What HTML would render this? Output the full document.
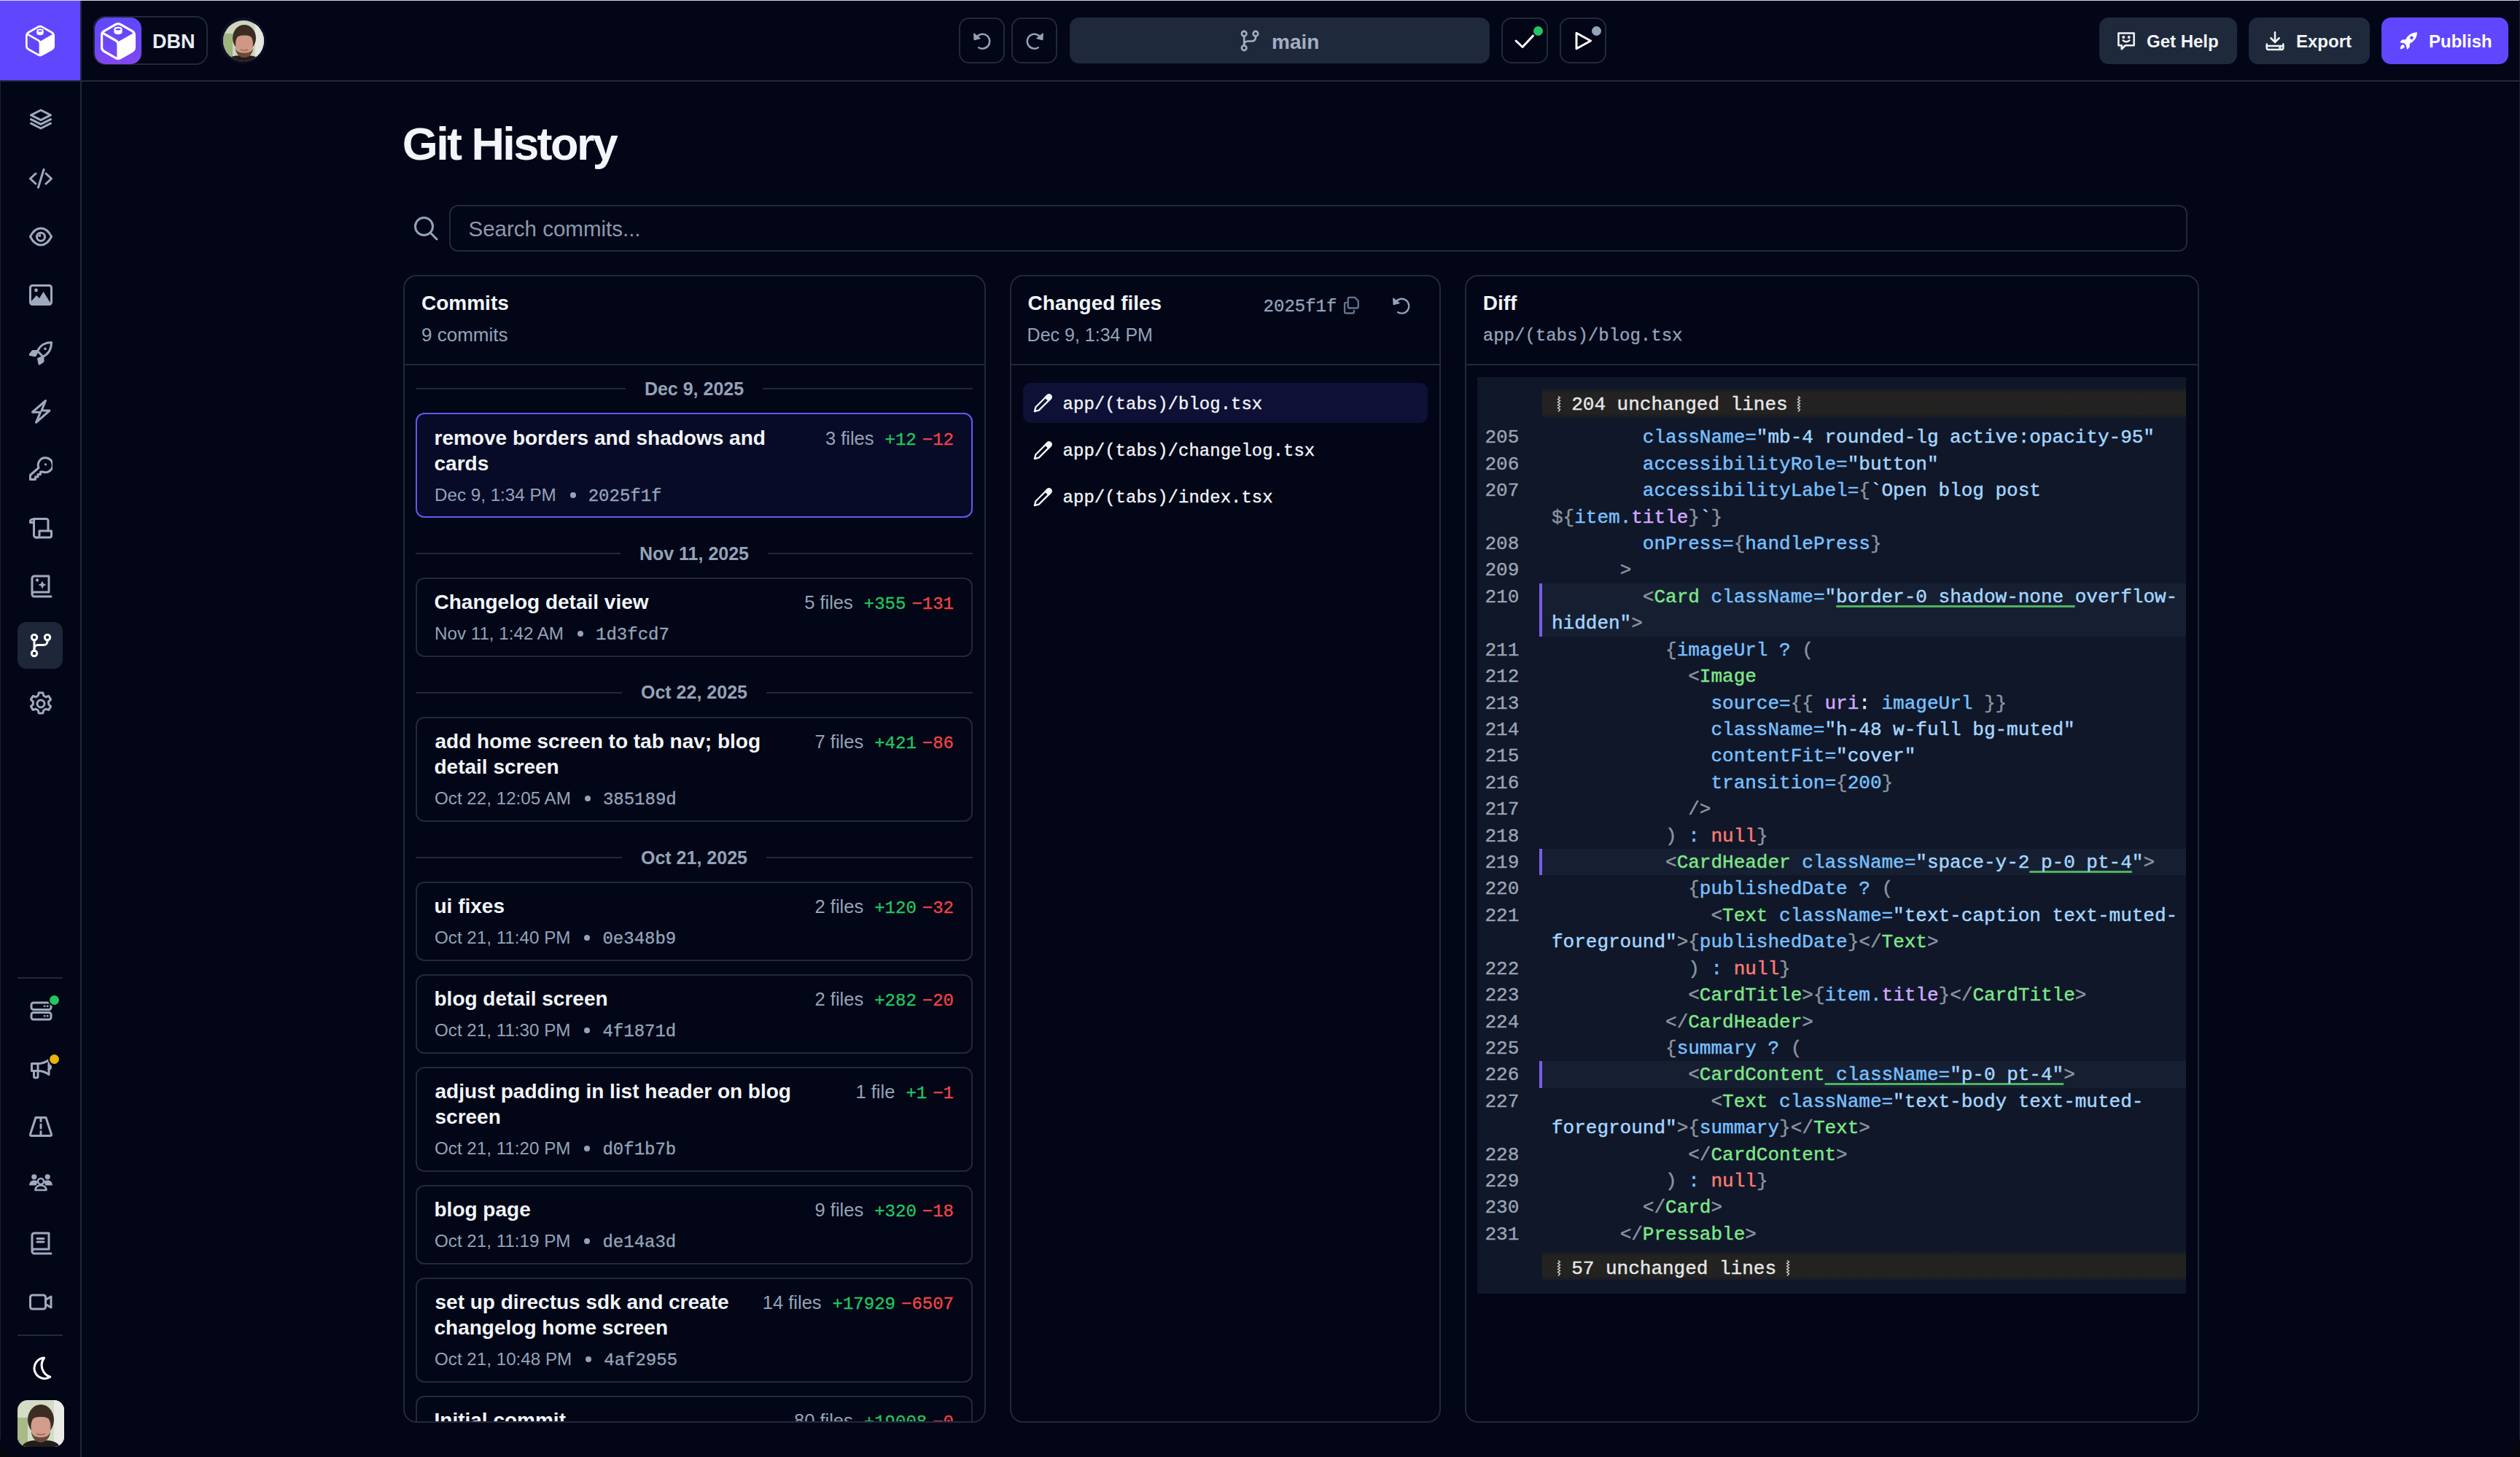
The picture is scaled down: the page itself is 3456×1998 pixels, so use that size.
<!DOCTYPE html>
<html><head><meta charset="utf-8">
<style>
html,body{margin:0;padding:0;background:#05070a;}
body{width:3456px;height:1998px;overflow:hidden;position:relative;font-family:"Liberation Sans",sans-serif;}
#frame{position:absolute;left:0;top:0;width:3456px;height:1998px;background:#020617;border-radius:0 0 28px 28px;overflow:hidden;}
.abs{position:absolute;}
.mono{font-family:"Liberation Mono",monospace;}
.topline{left:0;top:0;width:3456px;height:1px;background:rgba(232,234,246,0.9);}
.hline{background:#23283a;}
.btn-o{position:absolute;box-sizing:border-box;border:2px solid #23283a;border-radius:14px;}
.btn-f{position:absolute;background:#1e293b;border-radius:13px;}
svg{display:block;}
.ic{position:absolute;}
.t{position:absolute;white-space:pre;line-height:1;}
</style></head>
<body>
<div id="frame">
  <!-- sidebar / header lines -->
  <div class="abs" style="left:0;top:0;width:110px;height:110px;background:#6047fd"></div>
  <div class="abs hline" style="left:110px;top:0;width:2px;height:1998px"></div>
  <div class="abs hline" style="left:0;top:110px;width:3456px;height:2px"></div>
  <div class="abs topline"></div>
  <div class="abs" style="left:0;top:110px;width:1px;height:1888px;background:#1d2030"></div>
  <div class="abs" style="left:3455px;top:0;width:1px;height:1998px;background:#1d2030"></div>
  <!--HEADER-->
  <svg class="ic" style="left:35px;top:34px" width="40" height="44" viewBox="0 0 40 44">
    <path d="M20 22.7 L38.7 12 L38.7 32 L20 42.7 Z" fill="#fff"/>
    <path d="M17.4 2.8 Q20 1.3 22.6 2.8 L36.1 10.5 Q38.7 12 38.7 15 L38.7 29 Q38.7 32 36.1 33.5 L22.6 41.2 Q20 42.7 17.4 41.2 L3.9 33.5 Q1.3 32 1.3 29 L1.3 15 Q1.3 12 3.9 10.5 Z" fill="none" stroke="#fff" stroke-width="2.7"/>
    <path d="M2.5 12.8 L17.6 21.4 Q20 22.8 20 25.6 L20 42" fill="none" stroke="#fff" stroke-width="2.7" stroke-linecap="round"/>
    <path d="M15.3 8.4 V11.6 A4.7 2.7 0 0 0 24.7 11.6 V8.4 Z" fill="#fff"/>
    <ellipse cx="20" cy="8.4" rx="3.8" ry="1.9" fill="#6047fd" stroke="#fff" stroke-width="1.8"/>
  </svg>
  <div class="btn-o" style="left:128px;top:22px;width:157px;height:67px;border-radius:16px"></div>
  <div class="abs" style="left:130px;top:24px;width:64px;height:64px;border-radius:15px;background:linear-gradient(180deg,#6047fd 0%,#6a48f8 55%,#8446f0 100%)"></div>
  <svg class="ic" style="left:138px;top:30px" width="48" height="53" viewBox="0 0 40 44">
    <path d="M20 22.7 L38.7 12 L38.7 32 L20 42.7 Z" fill="#fff"/>
    <path d="M17.4 2.8 Q20 1.3 22.6 2.8 L36.1 10.5 Q38.7 12 38.7 15 L38.7 29 Q38.7 32 36.1 33.5 L22.6 41.2 Q20 42.7 17.4 41.2 L3.9 33.5 Q1.3 32 1.3 29 L1.3 15 Q1.3 12 3.9 10.5 Z" fill="none" stroke="#fff" stroke-width="2.7"/>
    <path d="M2.5 12.8 L17.6 21.4 Q20 22.8 20 25.6 L20 42" fill="none" stroke="#fff" stroke-width="2.7" stroke-linecap="round"/>
    <path d="M15.3 8.4 V11.6 A4.7 2.7 0 0 0 24.7 11.6 V8.4 Z" fill="#fff"/>
    <ellipse cx="20" cy="8.4" rx="3.8" ry="1.9" fill="#6447fb" stroke="#fff" stroke-width="1.8"/>
  </svg>
  <div class="t" style="left:209px;top:44.3px;font-size:27px;font-weight:bold;color:#e8ecf6">DBN</div>
  <!-- avatar -->
  <div class="abs" style="left:302px;top:24px;width:63px;height:63px;border-radius:50%;background:#120f2a"></div>
  <svg class="ic" style="left:306px;top:28px" width="56" height="56" viewBox="0 0 56 56">
    <defs><clipPath id="cav"><circle cx="28" cy="28" r="28"/></clipPath></defs>
    <g clip-path="url(#cav)">
      <rect width="56" height="56" fill="#cdd6bd"/>
      <rect x="0" y="18" width="13" height="34" fill="#9fb47e"/>
      <rect x="44" y="0" width="12" height="56" fill="#e6e7e0"/>
      <path d="M4 56 Q8 47 28 48 Q48 47 52 56 Z" fill="#231d1a"/>
      <ellipse cx="29" cy="24" rx="16" ry="18" fill="#3b2d24"/>
      <ellipse cx="29" cy="32" rx="12" ry="15" fill="#cf9784"/>
      <path d="M16 27 C16 19 21 15 29 15 C37 15 42 19 42 27 C40 22 35.5 20.5 29 20.5 C22.5 20.5 18 22 16 27 Z" fill="#3b2d24"/>
      <path d="M16.5 37 C17.5 46 22 51 29 51 C36 51 40.5 46 41.5 37 C39.5 43 35.5 44.5 29 44.5 C22.5 44.5 18.5 43 16.5 37 Z" fill="#6a4a3a"/>
      <path d="M24 40 Q29 42.5 34 40" stroke="#a86a5e" stroke-width="1.5" fill="none"/>
    </g>
  </svg>
  <!-- undo / redo -->
  <div class="btn-o" style="left:1315px;top:24px;width:63px;height:63px"></div>
  <svg class="ic" style="left:1332px;top:42px" width="28" height="28" viewBox="0 0 24 24" fill="none" stroke="#94a3b8" stroke-width="2.1" stroke-linecap="round" stroke-linejoin="round">
    <path d="M5.2 9.6 A8.5 8.5 0 1 1 8.75 19.9"/><path d="M3.2 3.4 L3.5 10.8 L10.4 9.2 Z" fill="#94a3b8" stroke-width="1"/>
  </svg>
  <div class="btn-o" style="left:1387px;top:24px;width:63px;height:63px"></div>
  <svg class="ic" style="left:1406px;top:42px" width="28" height="28" viewBox="0 0 24 24" fill="none" stroke="#94a3b8" stroke-width="2.1" stroke-linecap="round" stroke-linejoin="round">
    <path d="M18.8 9.6 A8.5 8.5 0 1 0 15.25 19.9"/><path d="M20.8 3.4 L20.5 10.8 L13.6 9.2 Z" fill="#94a3b8" stroke-width="1"/>
  </svg>
  <!-- branch bar -->
  <div class="btn-f" style="left:1467px;top:24px;width:576px;height:63px"></div>
  <svg class="ic" style="left:1701px;top:41px" width="28" height="30" viewBox="0 0 28 30" fill="none" stroke="#a3aec4" stroke-width="2.6" stroke-linecap="round">
    <circle cx="5.2" cy="5.2" r="3.3"/><circle cx="21" cy="5.2" r="3.3"/><circle cx="5.2" cy="24.8" r="3.3"/>
    <path d="M5.2 8.5 V21.5 M21 8.5 V10.5 A5 5 0 0 1 16 15.5 H10.2 A5 5 0 0 0 5.2 20.5"/>
  </svg>
  <div class="t" style="left:1744px;top:44px;font-size:28px;font-weight:bold;color:#a3aec4">main</div>
  <!-- check / play -->
  <div class="btn-o" style="left:2059px;top:24px;width:64px;height:63px"></div>
  <svg class="ic" style="left:2076px;top:45px" width="30" height="22" viewBox="0 0 30 22" fill="none" stroke="#fff" stroke-width="3" stroke-linecap="round" stroke-linejoin="round"><path d="M3 11 L12 19.5 L27.5 3"/></svg>
  <div class="abs" style="left:2102.5px;top:35.5px;width:13px;height:13px;border-radius:50%;background:#22c55e;box-shadow:0 0 0 2px #020617"></div>
  <div class="btn-o" style="left:2139px;top:24px;width:64px;height:63px"></div>
  <svg class="ic" style="left:2157px;top:42px" width="28" height="28" viewBox="0 0 28 28" fill="none" stroke="#fff" stroke-width="3" stroke-linejoin="round" stroke-linecap="round"><path d="M5 3.2 L24.5 14 L5 24.8 Z"/></svg>
  <div class="abs" style="left:2182.5px;top:35.5px;width:13px;height:13px;border-radius:50%;background:#94a3b8;box-shadow:0 0 0 2px #020617"></div>
  <!-- right buttons -->
  <div class="btn-f" style="left:2879px;top:24px;width:189px;height:64px"></div>
  <svg class="ic" style="left:2901px;top:41px" width="30" height="30" viewBox="0 0 24 24" fill="none" stroke="#f1f5f9" stroke-width="2" stroke-linecap="round" stroke-linejoin="round">
    <path d="M3.5 3.5 H20.5 V17 H11 L7 21 V17 H3.5 Z"/><path d="M8.5 11.5 Q12 14.5 15.5 11.5"/><circle cx="9" cy="8" r="0.6" fill="#f1f5f9"/><circle cx="15" cy="8" r="0.6" fill="#f1f5f9"/>
  </svg>
  <div class="t" style="left:2944px;top:45px;font-size:24px;font-weight:bold;color:#f1f5f9">Get Help</div>
  <div class="btn-f" style="left:3084px;top:24px;width:166px;height:64px"></div>
  <svg class="ic" style="left:3105px;top:41px" width="30" height="30" viewBox="0 0 24 24" fill="none" stroke="#f1f5f9" stroke-width="2" stroke-linecap="round" stroke-linejoin="round">
    <path d="M12 2.5 V13.5 M7.5 9 L12 13.5 L16.5 9"/><path d="M3 15.5 V20 A1.5 1.5 0 0 0 4.5 21.5 H19.5 A1.5 1.5 0 0 0 21 20 V15.5"/><path d="M3 17.5 H21"/><circle cx="17.5" cy="19.5" r="0.5" fill="#f1f5f9"/>
  </svg>
  <div class="t" style="left:3149px;top:45px;font-size:24px;font-weight:bold;color:#f1f5f9">Export</div>
  <div class="abs" style="left:3266px;top:24px;width:174px;height:64px;border-radius:13px;background:#6047fd"></div>
  <svg class="ic" style="left:3288px;top:41px" width="30" height="30" viewBox="0 0 24 24">
    <path d="M21.5 2.5 C16 2.5 11.5 5.5 9 10.5 L5 10.8 L2.5 13.5 L7.5 14.8 L9.2 16.5 L10.5 21.5 L13.2 19 L13.5 15 C18.5 12.5 21.5 8 21.5 2.5 Z" fill="#fff"/>
    <circle cx="15.5" cy="8.5" r="1.8" fill="#6047fd"/>
    <path d="M6 16 C4 16.5 3 18.5 2.8 21.2 C5.5 21 7.5 20 8 18 Z" fill="#fff"/>
  </svg>
  <div class="t" style="left:3331px;top:45px;font-size:24px;font-weight:bold;color:#fff">Publish</div>
  <!--SIDEBAR-->
  <div class="abs" style="left:24px;top:853px;width:62px;height:64px;border-radius:12px;background:#1e273a"></div>
  <svg class="ic" style="left:40px;top:148px" width="32" height="960" viewBox="0 0 32 960" fill="none" stroke="#a0aabe" stroke-width="3" stroke-linecap="round" stroke-linejoin="round">
    <!-- layers: center y 16 -->
    <path d="M16 3 L29.5 9.8 L16 16.6 L2.5 9.8 Z"/>
    <path d="M2.5 15.6 L16 22.4 L29.5 15.6"/>
    <path d="M2.5 21.2 L16 28 L29.5 21.2"/>
    <!-- code: cy 96 (245-149) -->
    <g transform="translate(0,80)">
      <path d="M9 10 L1.5 17 L9 24"/><path d="M23 10 L30.5 17 L23 24"/><path d="M20 4.5 L12.5 29"/>
    </g>
    <!-- eye: cy 176 -->
    <g transform="translate(0,160)">
      <path d="M1.5 16.5 C5 9.5 10 5 16 5 C22 5 27 9.5 30.5 16.5 C27 23.5 22 28 16 28 C10 28 5 23.5 1.5 16.5 Z"/>
      <circle cx="16" cy="16.8" r="5.6"/>
      <path d="M16 16.8 L12.2 16.8 A3.8 3.8 0 0 1 16 13 Z" fill="#a0aabe" stroke="none"/>
    </g>
    <!-- image: cy 256 -->
    <g transform="translate(0,240)">
      <rect x="1.5" y="3.5" width="29" height="26" rx="3"/>
      <path d="M3 28 L3 25 L10 17 L14 21 L19.5 12 L29 27 L29 28 Z" fill="#a0aabe" stroke="none"/>
      <circle cx="9.5" cy="10" r="2.4" fill="#a0aabe" stroke="none"/>
    </g>
    <!-- rocket: cy 336 -->
    <g transform="translate(0,320)">
      <path d="M30.5 1.5 C23 1.5 15 5 11.5 13.5 L19 21 C27.5 17 30.5 9 30.5 1.5 Z"/>
      <path d="M11.5 13.5 L5 13.5 L1 18.3 L8.2 19.8 Z" fill="#a0aabe"/>
      <path d="M19 21 L19 27.5 L14 31 L12.6 24 Z" fill="#a0aabe"/>
      <circle cx="22" cy="10.3" r="1.8" fill="#a0aabe" stroke="none"/>
    </g>
    <!-- zap: cy 416 -->
    <g transform="translate(0,400)">
      <path d="M22.5 1.5 L4.5 17.2 L15.5 17.2 L9.5 31.3 L28 15 L17 15 Z"/>
    </g>
    <!-- key: cy 496 -->
    <g transform="translate(0,480)">
      <path d="M13 13.5 A10 10 0 1 1 18.5 19 L15.5 19 L15.5 22.5 L12 22.5 L12 26 L8.5 26 L8.5 29.5 L1.5 29.5 L1.5 23.5 Z"/>
      <circle cx="22.5" cy="8.8" r="1.6" fill="#a0aabe" stroke="none"/>
    </g>
    <!-- scroll: cy 576 -->
    <g transform="translate(0,560)">
      <path d="M6.5 8.5 H1.5 V6.5 A3 3 0 0 1 6.5 5 V26 A3 3 0 0 0 9.5 29"/>
      <path d="M6 3.5 H23.5 A2.5 2.5 0 0 1 26 6 V20"/>
      <path d="M9.5 29 H28 A2.5 2.5 0 0 0 30.5 26.5 V20 H14 V26 A3 3 0 0 1 9.5 29"/>
    </g>
    <!-- book sparkles: cy 656 -->
    <g transform="translate(0,640)">
      <path d="M4 26.5 V5 A3 3 0 0 1 7 2 H27 V24 H7 A3 3 0 0 0 4 27 A3 3 0 0 0 7 30 H30"/>
      <path d="M11 6 V9 M9.5 7.5 H12.5" stroke-width="2"/>
      <path d="M18 9.5 C18.5 12.5 19.5 13.5 22.5 14 C19.5 14.5 18.5 15.5 18 18.5 C17.5 15.5 16.5 14.5 13.5 14 C16.5 13.5 17.5 12.5 18 9.5 Z" fill="#a0aabe" stroke-width="1.2"/>
    </g>
    <!-- git branch (active, white): cy 736 -->
    <g transform="translate(0,720)" stroke="#ffffff">
      <circle cx="7" cy="6" r="3.7"/><circle cx="25" cy="6" r="3.7"/><circle cx="7" cy="28" r="3.7"/>
      <path d="M7 9.7 V24.3"/><path d="M25 9.7 V11.5 A5 5 0 0 1 20 16.5 H12 A5 5 0 0 0 7 21.5"/>
    </g>
    <!-- gear: cy 816 -->
    <g transform="translate(0,800)">
      <circle cx="16" cy="17" r="5"/>
      <path d="M13.2 1.5 H18.8 L19.8 5.5 L22.8 7.2 L26.8 6 L29.6 10.8 L26.6 13.7 V17.3 L29.6 20.2 L26.8 25 L22.8 23.8 L19.8 25.5 L18.8 29.5 H13.2 L12.2 25.5 L9.2 23.8 L5.2 25 L2.4 20.2 L5.4 17.3 V13.7 L2.4 10.8 L5.2 6 L9.2 7.2 L12.2 5.5 Z" transform="translate(0,0.5)"/>
    </g>
  </svg>
  <div class="abs hline" style="left:24px;top:1340px;width:62px;height:2px"></div>
  <svg class="ic" style="left:40px;top:1369px" width="32" height="520" viewBox="0 0 32 520" fill="none" stroke="#a0aabe" stroke-width="3" stroke-linecap="round" stroke-linejoin="round">
    <!-- server: cy 16 (1385) -->
    <rect x="3" y="6" width="27" height="9.5" rx="3"/><rect x="3" y="19.5" width="27" height="9.5" rx="3"/>
    <circle cx="21" cy="10.8" r="1" fill="#a0aabe" stroke-width="1"/><circle cx="25" cy="10.8" r="1" fill="#a0aabe" stroke-width="1"/>
    <circle cx="21" cy="24.2" r="1" fill="#a0aabe" stroke-width="1"/><circle cx="25" cy="24.2" r="1" fill="#a0aabe" stroke-width="1"/>
    <!-- megaphone: cy 96 (1465) -->
    <g transform="translate(0,80)">
      <path d="M3.5 9.5 H12 V19.5 H3.5 Z" transform="translate(0,0)"/>
      <path d="M12 9.5 C18 9.5 23 7.5 27 4.5 V24.5 C23 21.5 18 19.5 12 19.5"/>
      <path d="M6.5 19.5 V27 A2 2 0 0 0 8.5 29 H10 A2 2 0 0 0 12 27 V19.5"/>
      <path d="M27 12 A2.5 2.5 0 0 1 27 17" />
    </g>
    <!-- road: cy 176 (1546) -->
    <g transform="translate(0,160)">
      <path d="M9 3.5 H23 L30.5 26.5 A1.5 1.5 0 0 1 29 28.5 H3 A1.5 1.5 0 0 1 1.5 26.5 Z"/>
      <path d="M16 5 V8.5 M16 13 V18 M16 22.5 V27"/>
    </g>
    <!-- users: cy 256 (1625) -->
    <g transform="translate(0,240)">
      <circle cx="6.8" cy="4.8" r="3.6" fill="#a0aabe" stroke="none"/><circle cx="25.2" cy="4.8" r="3.6" fill="#a0aabe" stroke="none"/>
      <path d="M0 16.5 C0.5 11.5 3 9.5 7 9.5 C10 9.5 11.5 10.5 12.5 12 C10.5 13.5 10 15 9.8 16.5 Z" fill="#a0aabe" stroke="none"/>
      <path d="M32 16.5 C31.5 11.5 29 9.5 25 9.5 C22 9.5 20.5 10.5 19.5 12 C21.5 13.5 22 15 22.2 16.5 Z" fill="#a0aabe" stroke="none"/>
      <circle cx="16" cy="11" r="4" stroke-width="2.6"/>
      <path d="M8.5 23 C9 18.5 12 16.5 16 16.5 C20 16.5 23 18.5 23.5 23 Z" stroke-width="2.6"/>
    </g>
    <!-- book: cy 336 (1706) -->
    <g transform="translate(0,320)">
      <path d="M4 26.5 V5 A3 3 0 0 1 7 2 H27 V24 H7 A3 3 0 0 0 4 27 A3 3 0 0 0 7 30 H30"/>
      <path d="M11 9.5 H20 M11 14 H20"/>
    </g>
    <!-- video: cy 416 (1786) -->
    <g transform="translate(0,400)">
      <rect x="1.5" y="7" width="21" height="19" rx="3"/>
      <path d="M22.5 13.5 L30 9 V24 L22.5 19.5"/>
    </g>
  </svg>
  <div class="abs" style="left:67.5px;top:1365px;width:13px;height:13px;border-radius:50%;background:#22c55e;box-shadow:0 0 0 2px #020617"></div>
  <div class="abs" style="left:67.5px;top:1445.5px;width:13px;height:13px;border-radius:50%;background:#eab308;box-shadow:0 0 0 2px #020617"></div>
  <div class="abs hline" style="left:24px;top:1830px;width:62px;height:2px"></div>
  <svg class="ic" style="left:42px;top:1860px" width="30" height="32" viewBox="0 0 30 32" fill="none" stroke="#fff" stroke-width="3" stroke-linejoin="round">
    <path d="M18.5 2 A14.2 14.2 0 1 0 26.8 28.2 A17 17 0 0 1 18.5 2 Z"/>
  </svg>
  <svg class="ic" style="left:24px;top:1920px" width="64" height="64" viewBox="0 0 64 64">
    <defs><clipPath id="cav2"><rect width="64" height="64" rx="14"/></clipPath></defs>
    <g clip-path="url(#cav2)">
      <rect width="64" height="64" fill="#d3dcc4"/>
      <rect x="0" y="24" width="14" height="40" fill="#a7ba88"/>
      <rect x="50" y="0" width="14" height="64" fill="#e9eae4"/>
      <path d="M6 64 Q10 54 32 55 Q54 54 58 64 Z" fill="#231d1a"/>
      <ellipse cx="32" cy="27" rx="18" ry="21" fill="#3b2d24"/>
      <ellipse cx="32" cy="36" rx="13.5" ry="17" fill="#d29c8a"/>
      <path d="M17.5 30 C17.5 21 23 16.5 32 16.5 C41 16.5 46.5 21 46.5 30 C44 24.5 39 23 32 23 C25 23 20 24.5 17.5 30 Z" fill="#3b2d24"/>
      <path d="M18.5 42 C19.5 52 25 58 32 58 C39 58 44.5 52 45.5 42 C43 49 39 51 32 51 C25 51 21 49 18.5 42 Z" fill="#6a4a3a"/>
      <path d="M26 46 Q32 49 38 46" stroke="#a86a5e" stroke-width="1.8" fill="none"/>
    </g>
  </svg>
  <div class="t" style="left:551.8px;top:165.9px;font-size:63px;font-weight:bold;color:#f3f5fa;letter-spacing:-2.6px">Git History</div>
<svg class="ic" style="left:566px;top:295px" width="36" height="36" viewBox="0 0 36 36" fill="none" stroke="#94a3b8" stroke-width="3" stroke-linecap="round"><circle cx="15.5" cy="15.5" r="12"/><path d="M24.5 24.5 L33 33"/></svg>
<div class="abs" style="left:616px;top:281px;width:2384px;height:64px;box-sizing:border-box;border:2px solid #23283a;border-radius:12px"></div>
<div class="t" style="left:642.5px;top:298.9px;font-size:29.5px;color:#8e99ad;">Search commits...</div>
<div class="abs" style="left:553px;top:377px;width:799px;height:1574px;box-sizing:border-box;border:2px solid #23283a;border-radius:18px"></div>
<div class="abs" style="left:553px;top:499px;width:799px;height:2px;background:#23283a"></div>
<div class="abs" style="left:1385px;top:377px;width:591px;height:1574px;box-sizing:border-box;border:2px solid #23283a;border-radius:18px"></div>
<div class="abs" style="left:1385px;top:499px;width:591px;height:2px;background:#23283a"></div>
<div class="abs" style="left:2009px;top:377px;width:1007px;height:1574px;box-sizing:border-box;border:2px solid #23283a;border-radius:18px"></div>
<div class="abs" style="left:2009px;top:499px;width:1007px;height:2px;background:#23283a"></div>
<div class="t" style="left:578.0px;top:402.2px;font-size:28px;font-weight:bold;color:#f1f5f9;">Commits</div>
<div class="t" style="left:578.0px;top:445.7px;font-size:26px;color:#94a3b8;">9 commits</div>
<div class="t" style="left:1409.6px;top:402.2px;font-size:28px;font-weight:bold;color:#f1f5f9;">Changed files</div>
<div class="t" style="left:1408.6px;top:446.8px;font-size:25px;color:#94a3b8;">Dec 9, 1:34 PM</div>
<div class="t" style="left:1732.6px;top:409.4px;font-size:24px;font-family:'Liberation Mono',monospace;-webkit-text-stroke:0.35px currentColor;color:#94a3b8;">2025f1f</div>
<svg class="ic" style="left:1840px;top:405px" width="28" height="28" viewBox="0 0 24 24" fill="none" stroke="#64748b" stroke-width="2" stroke-linecap="round" stroke-linejoin="round"><path d="M9 2.5 H15.5 L19.5 6.5 V13.5 A1.5 1.5 0 0 1 18 15 H9 A1.5 1.5 0 0 1 7.5 13.5 V4 A1.5 1.5 0 0 1 9 2.5 Z"/><path d="M14.5 18 V19.5 A1.5 1.5 0 0 1 13 21 H5 A1.5 1.5 0 0 1 3.5 19.5 V10 A1.5 1.5 0 0 1 5 8.5 H5.5"/></svg>
<svg class="ic" style="left:1907px;top:405px" width="28" height="28" viewBox="0 0 24 24" fill="none" stroke="#94a3b8" stroke-width="2" stroke-linecap="round" stroke-linejoin="round"><path d="M5.2 9.6 A8.5 8.5 0 1 1 8.75 19.9"/><path d="M3.2 3.4 L3.5 10.8 L10.4 9.2 Z" fill="#94a3b8" stroke-width="1"/></svg>
<div class="t" style="left:2033.8px;top:401.9px;font-size:28px;font-weight:bold;color:#f1f5f9;">Diff</div>
<div class="t" style="left:2033.8px;top:448.9px;font-size:24px;font-family:'Liberation Mono',monospace;-webkit-text-stroke:0.35px currentColor;color:#94a3b8;">app/(tabs)/blog.tsx</div>
<div class="abs" style="left:555px;top:501px;width:794px;height:1448px;overflow:hidden;border-radius:0 0 16px 16px">

<div class="abs" style="left:15px;top:65px;width:764px;height:144px;box-sizing:border-box;border:2px solid #6657f3;border-radius:12px;background:#080b27"></div>
<div class="t" style="left:40.5px;top:86.2px;font-size:28px;font-weight:bold;color:#f1f5f9;">remove borders and shadows and</div>
<div class="t" style="left:40.5px;top:120.9px;font-size:28px;font-weight:bold;color:#f1f5f9;">cards</div>
<div class="abs" style="left:41px;top:166.9px;height:22px;display:flex;align-items:baseline;white-space:pre;line-height:22px"><span style="font-size:24.2px;color:#94a3b8">Dec 9, 1:34 PM</span><span style="display:inline-block;width:8px;height:8px;border-radius:50%;background:#94a3b8;margin:0 17px 0 19px;position:relative;top:-4px"></span><span style="font-family:'Liberation Mono',monospace;font-size:24px;color:#94a3b8;-webkit-text-stroke:0.35px currentColor">2025f1f</span></div>
<div class="abs" style="left:345px;width:408px;top:88.5px;height:22px;display:flex;justify-content:flex-end;align-items:baseline;white-space:pre;line-height:22px"><span style="font-size:25.5px;color:#94a3b8">3 files</span><span style="font-family:'Liberation Mono',monospace;font-size:24px;color:#22c55e;margin-left:15px;-webkit-text-stroke:0.35px currentColor">+12</span><span style="font-family:'Liberation Mono',monospace;font-size:24px;color:#ef4444;margin-left:8px;-webkit-text-stroke:0.35px currentColor">−12</span></div>

<div class="abs" style="left:15px;top:291px;width:764px;height:109px;box-sizing:border-box;border:2px solid #23283a;border-radius:12px"></div>
<div class="t" style="left:40.5px;top:311.2px;font-size:28px;font-weight:bold;color:#f1f5f9;">Changelog detail view</div>
<div class="abs" style="left:41px;top:357.2px;height:22px;display:flex;align-items:baseline;white-space:pre;line-height:22px"><span style="font-size:24.2px;color:#94a3b8">Nov 11, 1:42 AM</span><span style="display:inline-block;width:8px;height:8px;border-radius:50%;background:#94a3b8;margin:0 17px 0 19px;position:relative;top:-4px"></span><span style="font-family:'Liberation Mono',monospace;font-size:24px;color:#94a3b8;-webkit-text-stroke:0.35px currentColor">1d3fcd7</span></div>
<div class="abs" style="left:345px;width:408px;top:313.5px;height:22px;display:flex;justify-content:flex-end;align-items:baseline;white-space:pre;line-height:22px"><span style="font-size:25.5px;color:#94a3b8">5 files</span><span style="font-family:'Liberation Mono',monospace;font-size:24px;color:#22c55e;margin-left:15px;-webkit-text-stroke:0.35px currentColor">+355</span><span style="font-family:'Liberation Mono',monospace;font-size:24px;color:#ef4444;margin-left:8px;-webkit-text-stroke:0.35px currentColor">−131</span></div>

<div class="abs" style="left:15px;top:482px;width:764px;height:144px;box-sizing:border-box;border:2px solid #23283a;border-radius:12px"></div>
<div class="t" style="left:41.5px;top:502.2px;font-size:28px;font-weight:bold;color:#f1f5f9;">add home screen to tab nav; blog</div>
<div class="t" style="left:40.5px;top:536.9px;font-size:28px;font-weight:bold;color:#f1f5f9;">detail screen</div>
<div class="abs" style="left:41px;top:582.9px;height:22px;display:flex;align-items:baseline;white-space:pre;line-height:22px"><span style="font-size:24.2px;color:#94a3b8">Oct 22, 12:05 AM</span><span style="display:inline-block;width:8px;height:8px;border-radius:50%;background:#94a3b8;margin:0 17px 0 19px;position:relative;top:-4px"></span><span style="font-family:'Liberation Mono',monospace;font-size:24px;color:#94a3b8;-webkit-text-stroke:0.35px currentColor">385189d</span></div>
<div class="abs" style="left:345px;width:408px;top:504.5px;height:22px;display:flex;justify-content:flex-end;align-items:baseline;white-space:pre;line-height:22px"><span style="font-size:25.5px;color:#94a3b8">7 files</span><span style="font-family:'Liberation Mono',monospace;font-size:24px;color:#22c55e;margin-left:15px;-webkit-text-stroke:0.35px currentColor">+421</span><span style="font-family:'Liberation Mono',monospace;font-size:24px;color:#ef4444;margin-left:8px;-webkit-text-stroke:0.35px currentColor">−86</span></div>

<div class="abs" style="left:15px;top:708px;width:764px;height:109px;box-sizing:border-box;border:2px solid #23283a;border-radius:12px"></div>
<div class="t" style="left:40.5px;top:728.2px;font-size:28px;font-weight:bold;color:#f1f5f9;">ui fixes</div>
<div class="abs" style="left:41px;top:774.2px;height:22px;display:flex;align-items:baseline;white-space:pre;line-height:22px"><span style="font-size:24.2px;color:#94a3b8">Oct 21, 11:40 PM</span><span style="display:inline-block;width:8px;height:8px;border-radius:50%;background:#94a3b8;margin:0 17px 0 19px;position:relative;top:-4px"></span><span style="font-family:'Liberation Mono',monospace;font-size:24px;color:#94a3b8;-webkit-text-stroke:0.35px currentColor">0e348b9</span></div>
<div class="abs" style="left:345px;width:408px;top:730.5px;height:22px;display:flex;justify-content:flex-end;align-items:baseline;white-space:pre;line-height:22px"><span style="font-size:25.5px;color:#94a3b8">2 files</span><span style="font-family:'Liberation Mono',monospace;font-size:24px;color:#22c55e;margin-left:15px;-webkit-text-stroke:0.35px currentColor">+120</span><span style="font-family:'Liberation Mono',monospace;font-size:24px;color:#ef4444;margin-left:8px;-webkit-text-stroke:0.35px currentColor">−32</span></div>
<div class="abs" style="left:15px;top:835px;width:764px;height:109px;box-sizing:border-box;border:2px solid #23283a;border-radius:12px"></div>
<div class="t" style="left:40.5px;top:855.2px;font-size:28px;font-weight:bold;color:#f1f5f9;">blog detail screen</div>
<div class="abs" style="left:41px;top:901.2px;height:22px;display:flex;align-items:baseline;white-space:pre;line-height:22px"><span style="font-size:24.2px;color:#94a3b8">Oct 21, 11:30 PM</span><span style="display:inline-block;width:8px;height:8px;border-radius:50%;background:#94a3b8;margin:0 17px 0 19px;position:relative;top:-4px"></span><span style="font-family:'Liberation Mono',monospace;font-size:24px;color:#94a3b8;-webkit-text-stroke:0.35px currentColor">4f1871d</span></div>
<div class="abs" style="left:345px;width:408px;top:857.5px;height:22px;display:flex;justify-content:flex-end;align-items:baseline;white-space:pre;line-height:22px"><span style="font-size:25.5px;color:#94a3b8">2 files</span><span style="font-family:'Liberation Mono',monospace;font-size:24px;color:#22c55e;margin-left:15px;-webkit-text-stroke:0.35px currentColor">+282</span><span style="font-family:'Liberation Mono',monospace;font-size:24px;color:#ef4444;margin-left:8px;-webkit-text-stroke:0.35px currentColor">−20</span></div>
<div class="abs" style="left:15px;top:962px;width:764px;height:144px;box-sizing:border-box;border:2px solid #23283a;border-radius:12px"></div>
<div class="t" style="left:41.5px;top:982.2px;font-size:28px;font-weight:bold;color:#f1f5f9;">adjust padding in list header on blog</div>
<div class="t" style="left:41.5px;top:1016.9px;font-size:28px;font-weight:bold;color:#f1f5f9;">screen</div>
<div class="abs" style="left:41px;top:1062.9px;height:22px;display:flex;align-items:baseline;white-space:pre;line-height:22px"><span style="font-size:24.2px;color:#94a3b8">Oct 21, 11:20 PM</span><span style="display:inline-block;width:8px;height:8px;border-radius:50%;background:#94a3b8;margin:0 17px 0 19px;position:relative;top:-4px"></span><span style="font-family:'Liberation Mono',monospace;font-size:24px;color:#94a3b8;-webkit-text-stroke:0.35px currentColor">d0f1b7b</span></div>
<div class="abs" style="left:345px;width:408px;top:984.5px;height:22px;display:flex;justify-content:flex-end;align-items:baseline;white-space:pre;line-height:22px"><span style="font-size:25.5px;color:#94a3b8">1 file</span><span style="font-family:'Liberation Mono',monospace;font-size:24px;color:#22c55e;margin-left:15px;-webkit-text-stroke:0.35px currentColor">+1</span><span style="font-family:'Liberation Mono',monospace;font-size:24px;color:#ef4444;margin-left:8px;-webkit-text-stroke:0.35px currentColor">−1</span></div>
<div class="abs" style="left:15px;top:1124px;width:764px;height:109px;box-sizing:border-box;border:2px solid #23283a;border-radius:12px"></div>
<div class="t" style="left:40.5px;top:1144.2px;font-size:28px;font-weight:bold;color:#f1f5f9;">blog page</div>
<div class="abs" style="left:41px;top:1190.2px;height:22px;display:flex;align-items:baseline;white-space:pre;line-height:22px"><span style="font-size:24.2px;color:#94a3b8">Oct 21, 11:19 PM</span><span style="display:inline-block;width:8px;height:8px;border-radius:50%;background:#94a3b8;margin:0 17px 0 19px;position:relative;top:-4px"></span><span style="font-family:'Liberation Mono',monospace;font-size:24px;color:#94a3b8;-webkit-text-stroke:0.35px currentColor">de14a3d</span></div>
<div class="abs" style="left:345px;width:408px;top:1146.5px;height:22px;display:flex;justify-content:flex-end;align-items:baseline;white-space:pre;line-height:22px"><span style="font-size:25.5px;color:#94a3b8">9 files</span><span style="font-family:'Liberation Mono',monospace;font-size:24px;color:#22c55e;margin-left:15px;-webkit-text-stroke:0.35px currentColor">+320</span><span style="font-family:'Liberation Mono',monospace;font-size:24px;color:#ef4444;margin-left:8px;-webkit-text-stroke:0.35px currentColor">−18</span></div>
<div class="abs" style="left:15px;top:1251px;width:764px;height:144px;box-sizing:border-box;border:2px solid #23283a;border-radius:12px"></div>
<div class="t" style="left:41.5px;top:1271.2px;font-size:28px;font-weight:bold;color:#f1f5f9;">set up directus sdk and create</div>
<div class="t" style="left:40.5px;top:1305.9px;font-size:28px;font-weight:bold;color:#f1f5f9;">changelog home screen</div>
<div class="abs" style="left:41px;top:1351.9px;height:22px;display:flex;align-items:baseline;white-space:pre;line-height:22px"><span style="font-size:24.2px;color:#94a3b8">Oct 21, 10:48 PM</span><span style="display:inline-block;width:8px;height:8px;border-radius:50%;background:#94a3b8;margin:0 17px 0 19px;position:relative;top:-4px"></span><span style="font-family:'Liberation Mono',monospace;font-size:24px;color:#94a3b8;-webkit-text-stroke:0.35px currentColor">4af2955</span></div>
<div class="abs" style="left:345px;width:408px;top:1273.5px;height:22px;display:flex;justify-content:flex-end;align-items:baseline;white-space:pre;line-height:22px"><span style="font-size:25.5px;color:#94a3b8">14 files</span><span style="font-family:'Liberation Mono',monospace;font-size:24px;color:#22c55e;margin-left:15px;-webkit-text-stroke:0.35px currentColor">+17929</span><span style="font-family:'Liberation Mono',monospace;font-size:24px;color:#ef4444;margin-left:8px;-webkit-text-stroke:0.35px currentColor">−6507</span></div>
<div class="abs" style="left:15px;top:1413px;width:764px;height:109px;box-sizing:border-box;border:2px solid #23283a;border-radius:12px"></div>
<div class="t" style="left:40.5px;top:1433.2px;font-size:28px;font-weight:bold;color:#f1f5f9;">Initial commit</div>
<div class="abs" style="left:41px;top:1479.2px;height:22px;display:flex;align-items:baseline;white-space:pre;line-height:22px"><span style="font-size:24.2px;color:#94a3b8">Oct 21, 10:30 PM</span><span style="display:inline-block;width:8px;height:8px;border-radius:50%;background:#94a3b8;margin:0 17px 0 19px;position:relative;top:-4px"></span><span style="font-family:'Liberation Mono',monospace;font-size:24px;color:#94a3b8;-webkit-text-stroke:0.35px currentColor">a1b2c3d</span></div>
<div class="abs" style="left:345px;width:408px;top:1435.5px;height:22px;display:flex;justify-content:flex-end;align-items:baseline;white-space:pre;line-height:22px"><span style="font-size:25.5px;color:#94a3b8">80 files</span><span style="font-family:'Liberation Mono',monospace;font-size:24px;color:#22c55e;margin-left:15px;-webkit-text-stroke:0.35px currentColor">+19008</span><span style="font-family:'Liberation Mono',monospace;font-size:24px;color:#ef4444;margin-left:8px;-webkit-text-stroke:0.35px currentColor">−0</span></div>
<div class="t" style="left:328.9px;top:19.8px;font-size:25px;font-weight:bold;color:#94a3b8">Dec 9, 2025</div><div class="abs" style="left:15px;top:31.0px;width:287.9px;height:2px;background:#23283a"></div><div class="abs" style="left:491.1px;top:31.0px;width:287.9px;height:2px;background:#23283a"></div>
<div class="t" style="left:321.9px;top:245.5px;font-size:25px;font-weight:bold;color:#94a3b8">Nov 11, 2025</div><div class="abs" style="left:15px;top:256.7px;width:280.9px;height:2px;background:#23283a"></div><div class="abs" style="left:498.1px;top:256.7px;width:280.9px;height:2px;background:#23283a"></div>
<div class="t" style="left:324.0px;top:436.2px;font-size:25px;font-weight:bold;color:#94a3b8">Oct 22, 2025</div><div class="abs" style="left:15px;top:447.5px;width:283.0px;height:2px;background:#23283a"></div><div class="abs" style="left:496.0px;top:447.5px;width:283.0px;height:2px;background:#23283a"></div>
<div class="t" style="left:324.0px;top:662.8px;font-size:25px;font-weight:bold;color:#94a3b8">Oct 21, 2025</div><div class="abs" style="left:15px;top:674.0px;width:283.0px;height:2px;background:#23283a"></div><div class="abs" style="left:496.0px;top:674.0px;width:283.0px;height:2px;background:#23283a"></div>
</div>
<div class="abs" style="left:1403px;top:525px;width:555px;height:55px;border-radius:10px;background:#0e1035"></div>
<svg class="ic" style="left:1416px;top:539.4px" width="28" height="28" viewBox="0 0 24 24" fill="none" stroke="#f1f5f9" stroke-width="2" stroke-linecap="round" stroke-linejoin="round"><path d="M17.5 2.8 A2.4 2.4 0 0 1 21.2 6.5 L7.5 20.2 L2.5 21.5 L3.8 16.5 Z"/><path d="M17.5 2.8 A2.4 2.4 0 0 1 21.2 6.5 L19 8.7 L15.3 5 Z" fill="#f1f5f9"/></svg>
<div class="t" style="left:1457.6px;top:543.0px;font-size:24px;font-family:'Liberation Mono',monospace;-webkit-text-stroke:0.35px currentColor;color:#f1f5f9;">app/(tabs)/blog.tsx</div>
<svg class="ic" style="left:1416px;top:603.8px" width="28" height="28" viewBox="0 0 24 24" fill="none" stroke="#f1f5f9" stroke-width="2" stroke-linecap="round" stroke-linejoin="round"><path d="M17.5 2.8 A2.4 2.4 0 0 1 21.2 6.5 L7.5 20.2 L2.5 21.5 L3.8 16.5 Z"/><path d="M17.5 2.8 A2.4 2.4 0 0 1 21.2 6.5 L19 8.7 L15.3 5 Z" fill="#f1f5f9"/></svg>
<div class="t" style="left:1457.6px;top:607.4px;font-size:24px;font-family:'Liberation Mono',monospace;-webkit-text-stroke:0.35px currentColor;color:#f1f5f9;">app/(tabs)/changelog.tsx</div>
<svg class="ic" style="left:1416px;top:667.8px" width="28" height="28" viewBox="0 0 24 24" fill="none" stroke="#f1f5f9" stroke-width="2" stroke-linecap="round" stroke-linejoin="round"><path d="M17.5 2.8 A2.4 2.4 0 0 1 21.2 6.5 L7.5 20.2 L2.5 21.5 L3.8 16.5 Z"/><path d="M17.5 2.8 A2.4 2.4 0 0 1 21.2 6.5 L19 8.7 L15.3 5 Z" fill="#f1f5f9"/></svg>
<div class="t" style="left:1457.6px;top:671.4px;font-size:24px;font-family:'Liberation Mono',monospace;-webkit-text-stroke:0.35px currentColor;color:#f1f5f9;">app/(tabs)/index.tsx</div>
<div class="abs" style="left:2026px;top:517px;width:972px;height:1257px;background:#0f1729"></div>
<div class="abs" style="left:2115px;top:533px;width:883px;height:40px;background:linear-gradient(180deg,#151a27 0px,#222221 6px,#242322 50%,#222221 34px,#151a27 40px)"></div><svg class="ic" style="left:2135px;top:543px" width="6" height="22" viewBox="0 0 6 22" fill="none" stroke="#d8dade" stroke-width="1.3" stroke-linejoin="miter"><path d="M2 0.5 L4.5 2.5 L1.5 4.5 L4.5 6.5 L1.5 8.5 L4.5 10.5 L1.5 12.5 L4.5 14.5 L1.5 16.5 L4.5 18.5 L2 21.5"/></svg><div class="t mono" style="left:2155.2px;top:542.1px;font-size:26px;color:#e6e8ea;-webkit-text-stroke:0.4px currentColor">204 unchanged lines</div><svg class="ic" style="left:2464.2px;top:543px" width="6" height="22" viewBox="0 0 6 22" fill="none" stroke="#d8dade" stroke-width="1.3" stroke-linejoin="miter"><path d="M2 0.5 L4.5 2.5 L1.5 4.5 L4.5 6.5 L1.5 8.5 L4.5 10.5 L1.5 12.5 L4.5 14.5 L1.5 16.5 L4.5 18.5 L2 21.5"/></svg>
<div class="abs" style="left:2115px;top:1716px;width:883px;height:40px;background:linear-gradient(180deg,#151a27 0px,#222221 6px,#242322 50%,#222221 34px,#151a27 40px)"></div><svg class="ic" style="left:2135px;top:1728px" width="6" height="22" viewBox="0 0 6 22" fill="none" stroke="#d8dade" stroke-width="1.3" stroke-linejoin="miter"><path d="M2 0.5 L4.5 2.5 L1.5 4.5 L4.5 6.5 L1.5 8.5 L4.5 10.5 L1.5 12.5 L4.5 14.5 L1.5 16.5 L4.5 18.5 L2 21.5"/></svg><div class="t mono" style="left:2155.2px;top:1727.1px;font-size:26px;color:#e6e8ea;-webkit-text-stroke:0.4px currentColor">57 unchanged lines</div><svg class="ic" style="left:2448.6px;top:1728px" width="6" height="22" viewBox="0 0 6 22" fill="none" stroke="#d8dade" stroke-width="1.3" stroke-linejoin="miter"><path d="M2 0.5 L4.5 2.5 L1.5 4.5 L4.5 6.5 L1.5 8.5 L4.5 10.5 L1.5 12.5 L4.5 14.5 L1.5 16.5 L4.5 18.5 L2 21.5"/></svg>
<div class="t mono" style="left:2036.5px;top:587.3px;font-size:26px;color:#9ba4b1;-webkit-text-stroke:0.4px currentColor">205</div>
<div class="t mono" style="left:2128px;top:587.3px;font-size:26px;color:#e6edf3;-webkit-text-stroke:0.45px currentColor">        <span style="color:#79c0ff">className=</span><span style="color:#a5d6ff">&quot;mb-4 rounded-lg active:opacity-95&quot;</span></div>
<div class="t mono" style="left:2036.5px;top:623.7px;font-size:26px;color:#9ba4b1;-webkit-text-stroke:0.4px currentColor">206</div>
<div class="t mono" style="left:2128px;top:623.7px;font-size:26px;color:#e6edf3;-webkit-text-stroke:0.45px currentColor">        <span style="color:#79c0ff">accessibilityRole=</span><span style="color:#a5d6ff">&quot;button&quot;</span></div>
<div class="t mono" style="left:2036.5px;top:660.1px;font-size:26px;color:#9ba4b1;-webkit-text-stroke:0.4px currentColor">207</div>
<div class="t mono" style="left:2128px;top:660.1px;font-size:26px;color:#e6edf3;-webkit-text-stroke:0.45px currentColor">        <span style="color:#79c0ff">accessibilityLabel=</span><span style="color:#8b949e">{</span><span style="color:#a5d6ff">`Open blog post </span></div>
<div class="t mono" style="left:2128px;top:696.5px;font-size:26px;color:#e6edf3;-webkit-text-stroke:0.45px currentColor"><span style="color:#8b949e">$</span><span style="color:#8b949e">{</span><span style="color:#79c0ff">item</span><span style="color:#79c0ff">.</span><span style="color:#d2a8ff">title</span><span style="color:#8b949e">}</span><span style="color:#a5d6ff">`</span><span style="color:#8b949e">}</span></div>
<div class="t mono" style="left:2036.5px;top:732.9px;font-size:26px;color:#9ba4b1;-webkit-text-stroke:0.4px currentColor">208</div>
<div class="t mono" style="left:2128px;top:732.9px;font-size:26px;color:#e6edf3;-webkit-text-stroke:0.45px currentColor">        <span style="color:#79c0ff">onPress=</span><span style="color:#8b949e">{</span><span style="color:#79c0ff">handlePress</span><span style="color:#8b949e">}</span></div>
<div class="t mono" style="left:2036.5px;top:769.4px;font-size:26px;color:#9ba4b1;-webkit-text-stroke:0.4px currentColor">209</div>
<div class="t mono" style="left:2128px;top:769.4px;font-size:26px;color:#e6edf3;-webkit-text-stroke:0.45px currentColor">      <span style="color:#8b949e">&gt;</span></div>
<div class="abs" style="left:2115px;top:799.8px;width:883px;height:72.8px;background:#161f31"></div>
<div class="abs" style="left:2111px;top:799.8px;width:4px;height:72.8px;background:#7a5de6"></div>
<div class="t mono" style="left:2036.5px;top:805.8px;font-size:26px;color:#9ba4b1;-webkit-text-stroke:0.4px currentColor">210</div>
<div class="t mono" style="left:2128px;top:805.8px;font-size:26px;color:#e6edf3;-webkit-text-stroke:0.45px currentColor">        <span style="color:#8b949e">&lt;</span><span style="color:#7ee787">Card</span><span style="color:#e6edf3"> </span><span style="color:#79c0ff">className=</span><span style="color:#a5d6ff">&quot;</span><span style="color:#a5d6ff;text-decoration:underline;text-decoration-color:#4fb35f;text-decoration-thickness:3px;text-underline-offset:4px;text-decoration-skip-ink:none">border-0 shadow-none </span><span style="color:#a5d6ff">overflow-</span></div>
<div class="t mono" style="left:2128px;top:842.2px;font-size:26px;color:#e6edf3;-webkit-text-stroke:0.45px currentColor"><span style="color:#a5d6ff">hidden&quot;</span><span style="color:#8b949e">&gt;</span></div>
<div class="t mono" style="left:2036.5px;top:878.6px;font-size:26px;color:#9ba4b1;-webkit-text-stroke:0.4px currentColor">211</div>
<div class="t mono" style="left:2128px;top:878.6px;font-size:26px;color:#e6edf3;-webkit-text-stroke:0.45px currentColor">          <span style="color:#8b949e">{</span><span style="color:#79c0ff">imageUrl</span><span style="color:#e6edf3"> </span><span style="color:#79c0ff">?</span><span style="color:#e6edf3"> </span><span style="color:#8b949e">(</span></div>
<div class="t mono" style="left:2036.5px;top:915.0px;font-size:26px;color:#9ba4b1;-webkit-text-stroke:0.4px currentColor">212</div>
<div class="t mono" style="left:2128px;top:915.0px;font-size:26px;color:#e6edf3;-webkit-text-stroke:0.45px currentColor">            <span style="color:#8b949e">&lt;</span><span style="color:#7ee787">Image</span></div>
<div class="t mono" style="left:2036.5px;top:951.5px;font-size:26px;color:#9ba4b1;-webkit-text-stroke:0.4px currentColor">213</div>
<div class="t mono" style="left:2128px;top:951.5px;font-size:26px;color:#e6edf3;-webkit-text-stroke:0.45px currentColor">              <span style="color:#79c0ff">source=</span><span style="color:#8b949e">{{</span><span style="color:#e6edf3"> </span><span style="color:#d2a8ff">uri</span><span style="color:#e6edf3">: </span><span style="color:#79c0ff">imageUrl</span><span style="color:#e6edf3"> </span><span style="color:#8b949e">}}</span></div>
<div class="t mono" style="left:2036.5px;top:987.9px;font-size:26px;color:#9ba4b1;-webkit-text-stroke:0.4px currentColor">214</div>
<div class="t mono" style="left:2128px;top:987.9px;font-size:26px;color:#e6edf3;-webkit-text-stroke:0.45px currentColor">              <span style="color:#79c0ff">className=</span><span style="color:#a5d6ff">&quot;h-48 w-full bg-muted&quot;</span></div>
<div class="t mono" style="left:2036.5px;top:1024.3px;font-size:26px;color:#9ba4b1;-webkit-text-stroke:0.4px currentColor">215</div>
<div class="t mono" style="left:2128px;top:1024.3px;font-size:26px;color:#e6edf3;-webkit-text-stroke:0.45px currentColor">              <span style="color:#79c0ff">contentFit=</span><span style="color:#a5d6ff">&quot;cover&quot;</span></div>
<div class="t mono" style="left:2036.5px;top:1060.7px;font-size:26px;color:#9ba4b1;-webkit-text-stroke:0.4px currentColor">216</div>
<div class="t mono" style="left:2128px;top:1060.7px;font-size:26px;color:#e6edf3;-webkit-text-stroke:0.45px currentColor">              <span style="color:#79c0ff">transition=</span><span style="color:#8b949e">{</span><span style="color:#79c0ff">200</span><span style="color:#8b949e">}</span></div>
<div class="t mono" style="left:2036.5px;top:1097.1px;font-size:26px;color:#9ba4b1;-webkit-text-stroke:0.4px currentColor">217</div>
<div class="t mono" style="left:2128px;top:1097.1px;font-size:26px;color:#e6edf3;-webkit-text-stroke:0.45px currentColor">            <span style="color:#8b949e">/&gt;</span></div>
<div class="t mono" style="left:2036.5px;top:1133.6px;font-size:26px;color:#9ba4b1;-webkit-text-stroke:0.4px currentColor">218</div>
<div class="t mono" style="left:2128px;top:1133.6px;font-size:26px;color:#e6edf3;-webkit-text-stroke:0.45px currentColor">          <span style="color:#8b949e">)</span><span style="color:#e6edf3"> </span><span style="color:#79c0ff">:</span><span style="color:#e6edf3"> </span><span style="color:#ff7b72">null</span><span style="color:#8b949e">}</span></div>
<div class="abs" style="left:2115px;top:1164.0px;width:883px;height:36.4px;background:#161f31"></div>
<div class="abs" style="left:2111px;top:1164.0px;width:4px;height:36.4px;background:#7a5de6"></div>
<div class="t mono" style="left:2036.5px;top:1170.0px;font-size:26px;color:#9ba4b1;-webkit-text-stroke:0.4px currentColor">219</div>
<div class="t mono" style="left:2128px;top:1170.0px;font-size:26px;color:#e6edf3;-webkit-text-stroke:0.45px currentColor">          <span style="color:#8b949e">&lt;</span><span style="color:#7ee787">CardHeader</span><span style="color:#e6edf3"> </span><span style="color:#79c0ff">className=</span><span style="color:#a5d6ff">&quot;space-y-2</span><span style="color:#a5d6ff;text-decoration:underline;text-decoration-color:#4fb35f;text-decoration-thickness:3px;text-underline-offset:4px;text-decoration-skip-ink:none"> p-0 pt-4</span><span style="color:#a5d6ff">&quot;</span><span style="color:#8b949e">&gt;</span></div>
<div class="t mono" style="left:2036.5px;top:1206.4px;font-size:26px;color:#9ba4b1;-webkit-text-stroke:0.4px currentColor">220</div>
<div class="t mono" style="left:2128px;top:1206.4px;font-size:26px;color:#e6edf3;-webkit-text-stroke:0.45px currentColor">            <span style="color:#8b949e">{</span><span style="color:#79c0ff">publishedDate</span><span style="color:#e6edf3"> </span><span style="color:#79c0ff">?</span><span style="color:#e6edf3"> </span><span style="color:#8b949e">(</span></div>
<div class="t mono" style="left:2036.5px;top:1242.8px;font-size:26px;color:#9ba4b1;-webkit-text-stroke:0.4px currentColor">221</div>
<div class="t mono" style="left:2128px;top:1242.8px;font-size:26px;color:#e6edf3;-webkit-text-stroke:0.45px currentColor">              <span style="color:#8b949e">&lt;</span><span style="color:#7ee787">Text</span><span style="color:#e6edf3"> </span><span style="color:#79c0ff">className=</span><span style="color:#a5d6ff">&quot;text-caption text-muted-</span></div>
<div class="t mono" style="left:2128px;top:1279.2px;font-size:26px;color:#e6edf3;-webkit-text-stroke:0.45px currentColor"><span style="color:#a5d6ff">foreground&quot;</span><span style="color:#8b949e">&gt;</span><span style="color:#8b949e">{</span><span style="color:#79c0ff">publishedDate</span><span style="color:#8b949e">}</span><span style="color:#8b949e">&lt;/</span><span style="color:#7ee787">Text</span><span style="color:#8b949e">&gt;</span></div>
<div class="t mono" style="left:2036.5px;top:1315.7px;font-size:26px;color:#9ba4b1;-webkit-text-stroke:0.4px currentColor">222</div>
<div class="t mono" style="left:2128px;top:1315.7px;font-size:26px;color:#e6edf3;-webkit-text-stroke:0.45px currentColor">            <span style="color:#8b949e">)</span><span style="color:#e6edf3"> </span><span style="color:#79c0ff">:</span><span style="color:#e6edf3"> </span><span style="color:#ff7b72">null</span><span style="color:#8b949e">}</span></div>
<div class="t mono" style="left:2036.5px;top:1352.1px;font-size:26px;color:#9ba4b1;-webkit-text-stroke:0.4px currentColor">223</div>
<div class="t mono" style="left:2128px;top:1352.1px;font-size:26px;color:#e6edf3;-webkit-text-stroke:0.45px currentColor">            <span style="color:#8b949e">&lt;</span><span style="color:#7ee787">CardTitle</span><span style="color:#8b949e">&gt;</span><span style="color:#8b949e">{</span><span style="color:#79c0ff">item</span><span style="color:#79c0ff">.</span><span style="color:#d2a8ff">title</span><span style="color:#8b949e">}</span><span style="color:#8b949e">&lt;/</span><span style="color:#7ee787">CardTitle</span><span style="color:#8b949e">&gt;</span></div>
<div class="t mono" style="left:2036.5px;top:1388.5px;font-size:26px;color:#9ba4b1;-webkit-text-stroke:0.4px currentColor">224</div>
<div class="t mono" style="left:2128px;top:1388.5px;font-size:26px;color:#e6edf3;-webkit-text-stroke:0.45px currentColor">          <span style="color:#8b949e">&lt;/</span><span style="color:#7ee787">CardHeader</span><span style="color:#8b949e">&gt;</span></div>
<div class="t mono" style="left:2036.5px;top:1424.9px;font-size:26px;color:#9ba4b1;-webkit-text-stroke:0.4px currentColor">225</div>
<div class="t mono" style="left:2128px;top:1424.9px;font-size:26px;color:#e6edf3;-webkit-text-stroke:0.45px currentColor">          <span style="color:#8b949e">{</span><span style="color:#79c0ff">summary</span><span style="color:#e6edf3"> </span><span style="color:#79c0ff">?</span><span style="color:#e6edf3"> </span><span style="color:#8b949e">(</span></div>
<div class="abs" style="left:2115px;top:1455.4px;width:883px;height:36.4px;background:#161f31"></div>
<div class="abs" style="left:2111px;top:1455.4px;width:4px;height:36.4px;background:#7a5de6"></div>
<div class="t mono" style="left:2036.5px;top:1461.3px;font-size:26px;color:#9ba4b1;-webkit-text-stroke:0.4px currentColor">226</div>
<div class="t mono" style="left:2128px;top:1461.3px;font-size:26px;color:#e6edf3;-webkit-text-stroke:0.45px currentColor">            <span style="color:#8b949e">&lt;</span><span style="color:#7ee787">CardContent</span><span style="color:#e6edf3;text-decoration:underline;text-decoration-color:#4fb35f;text-decoration-thickness:3px;text-underline-offset:4px;text-decoration-skip-ink:none"> </span><span style="color:#79c0ff;text-decoration:underline;text-decoration-color:#4fb35f;text-decoration-thickness:3px;text-underline-offset:4px;text-decoration-skip-ink:none">className=</span><span style="color:#a5d6ff;text-decoration:underline;text-decoration-color:#4fb35f;text-decoration-thickness:3px;text-underline-offset:4px;text-decoration-skip-ink:none">&quot;p-0 pt-4&quot;</span><span style="color:#8b949e">&gt;</span></div>
<div class="t mono" style="left:2036.5px;top:1497.8px;font-size:26px;color:#9ba4b1;-webkit-text-stroke:0.4px currentColor">227</div>
<div class="t mono" style="left:2128px;top:1497.8px;font-size:26px;color:#e6edf3;-webkit-text-stroke:0.45px currentColor">              <span style="color:#8b949e">&lt;</span><span style="color:#7ee787">Text</span><span style="color:#e6edf3"> </span><span style="color:#79c0ff">className=</span><span style="color:#a5d6ff">&quot;text-body text-muted-</span></div>
<div class="t mono" style="left:2128px;top:1534.2px;font-size:26px;color:#e6edf3;-webkit-text-stroke:0.45px currentColor"><span style="color:#a5d6ff">foreground&quot;</span><span style="color:#8b949e">&gt;</span><span style="color:#8b949e">{</span><span style="color:#79c0ff">summary</span><span style="color:#8b949e">}</span><span style="color:#8b949e">&lt;/</span><span style="color:#7ee787">Text</span><span style="color:#8b949e">&gt;</span></div>
<div class="t mono" style="left:2036.5px;top:1570.6px;font-size:26px;color:#9ba4b1;-webkit-text-stroke:0.4px currentColor">228</div>
<div class="t mono" style="left:2128px;top:1570.6px;font-size:26px;color:#e6edf3;-webkit-text-stroke:0.45px currentColor">            <span style="color:#8b949e">&lt;/</span><span style="color:#7ee787">CardContent</span><span style="color:#8b949e">&gt;</span></div>
<div class="t mono" style="left:2036.5px;top:1607.0px;font-size:26px;color:#9ba4b1;-webkit-text-stroke:0.4px currentColor">229</div>
<div class="t mono" style="left:2128px;top:1607.0px;font-size:26px;color:#e6edf3;-webkit-text-stroke:0.45px currentColor">          <span style="color:#8b949e">)</span><span style="color:#e6edf3"> </span><span style="color:#79c0ff">:</span><span style="color:#e6edf3"> </span><span style="color:#ff7b72">null</span><span style="color:#8b949e">}</span></div>
<div class="t mono" style="left:2036.5px;top:1643.4px;font-size:26px;color:#9ba4b1;-webkit-text-stroke:0.4px currentColor">230</div>
<div class="t mono" style="left:2128px;top:1643.4px;font-size:26px;color:#e6edf3;-webkit-text-stroke:0.45px currentColor">        <span style="color:#8b949e">&lt;/</span><span style="color:#7ee787">Card</span><span style="color:#8b949e">&gt;</span></div>
<div class="t mono" style="left:2036.5px;top:1679.9px;font-size:26px;color:#9ba4b1;-webkit-text-stroke:0.4px currentColor">231</div>
<div class="t mono" style="left:2128px;top:1679.9px;font-size:26px;color:#e6edf3;-webkit-text-stroke:0.45px currentColor">      <span style="color:#8b949e">&lt;/</span><span style="color:#7ee787">Pressable</span><span style="color:#8b949e">&gt;</span></div>
</div>
</body></html>
